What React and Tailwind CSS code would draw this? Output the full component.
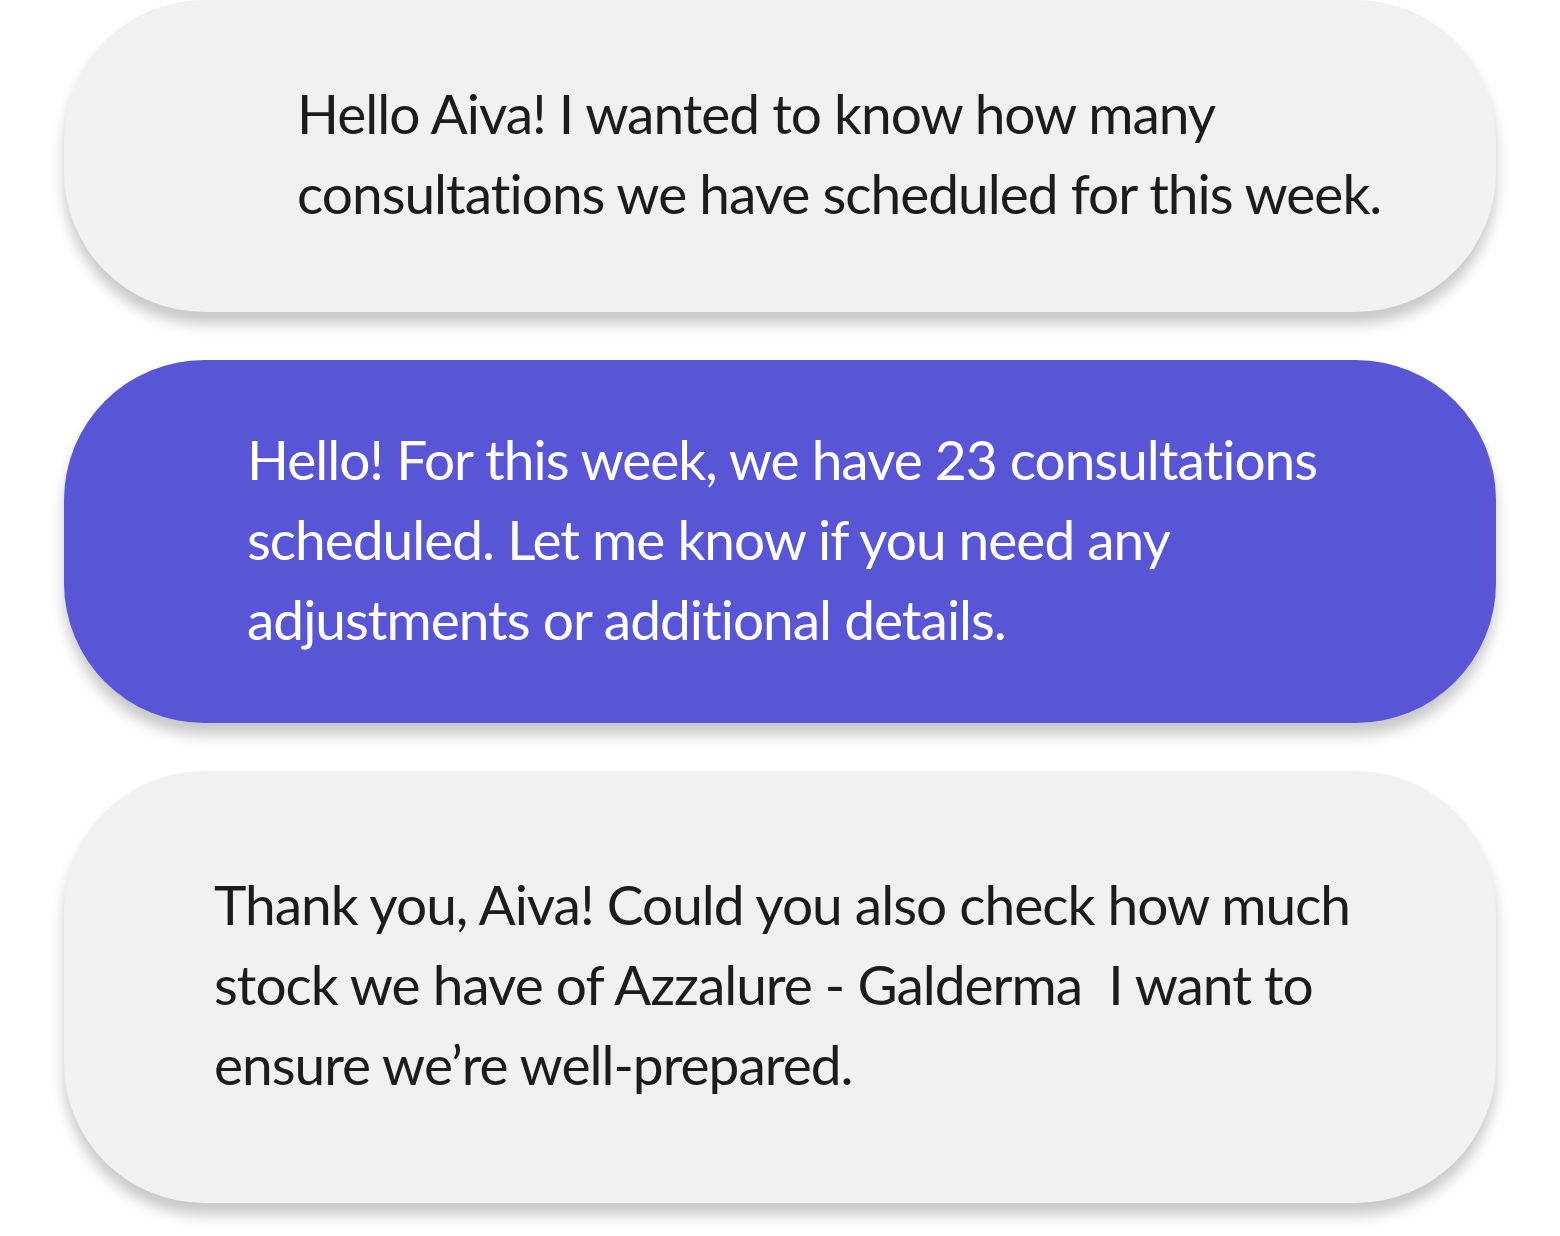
export default function App() {
  const cards = [
    {
      lines: ["Hello Aiva! I wanted to know how many", "consultations we have scheduled for this week."],
      cls: "bg-[#f1f1f1] text-[#1c1c1c] h-[312px] pl-[233px]",
    },
    {
      lines: [
        "Hello! For this week, we have 23 consultations",
        "scheduled. Let me know if you need any",
        "adjustments or additional details.",
      ],
      cls: "bg-[#5856d6] text-white h-[363px] pl-[183px]",
    },
    {
      lines: [
        "Thank you, Aiva! Could you also check how much",
        "stock we have of Azzalure - Galderma  I want to",
        "ensure we\u2019re well-prepared.",
      ],
      cls: "bg-[#f1f1f1] text-[#1c1c1c] h-[432px] pl-[150px]",
    },
  ];

  return (
    <div className="min-h-[1236px] w-[1560px] bg-white font-['Lato',sans-serif]">
      <div className="flex flex-col gap-[48px] pl-[64px] w-[1496px]">
        {cards.map((c, i) => (
          <div
            key={i}
            className={`flex flex-col justify-center pb-[6px] rounded-[140px] shadow-[0_12px_14px_rgba(0,0,0,0.22)] ${c.cls}`}
          >
            {c.lines.map((l, j) => (
              <div key={j} className="whitespace-pre text-[55px] leading-[80px] tracking-[-1px]">
                {l}
              </div>
            ))}
          </div>
        ))}
      </div>
    </div>
  );
}
